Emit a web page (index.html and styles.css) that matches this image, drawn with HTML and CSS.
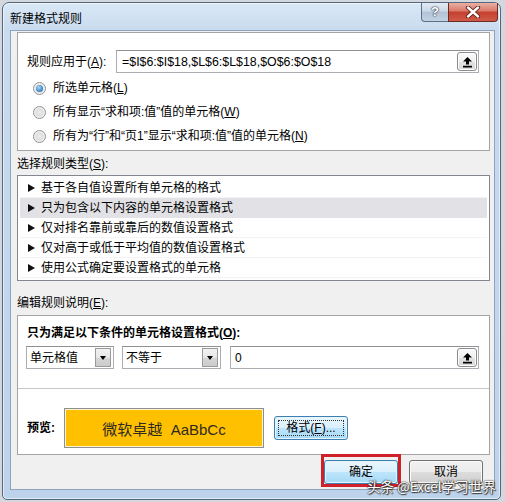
FILE: index.html
```html
<!DOCTYPE html>
<html lang="zh-CN">
<head>
<meta charset="utf-8">
<title>新建格式规则</title>
<link rel="stylesheet" href="styles.css">
</head>
<body>
<div class="window">
  <div class="titlebar">
    <span class="title">新建格式规则</span>
    <div class="caption-btns">
      <div class="cap help">?</div>
      <div class="cap close">
        <svg width="16" height="12" viewBox="0 0 16 12">
          <path d="M3 1.5 L13 10.5 M13 1.5 L3 10.5" stroke="#5a1a14" stroke-width="4.2" stroke-linecap="round"/>
          <path d="M3 1.5 L13 10.5 M13 1.5 L3 10.5" stroke="#ffffff" stroke-width="2.4" stroke-linecap="round"/>
        </svg>
      </div>
    </div>
  </div>
  <div class="client">
    <div class="panel top-panel">
      <div class="apply-row">
        <span class="apply-lbl">规则应用于(<u>A</u>):</span>
        <div class="textbox apply-box">
          <span class="tb-text">=$I$6:$I$18,$L$6:$L$18,$O$6:$O$18</span>
          <span class="ref-btn">
            <svg width="11" height="12" viewBox="0 0 11 12"><path d="M5.5 1 L10 5.5 L7 5.5 L7 8.5 L4 8.5 L4 5.5 L1 5.5 Z" fill="#000"/><rect x="1" y="9.8" width="9" height="1.7" fill="#000"/></svg>
          </span>
        </div>
      </div>
      <div class="radio-row"><span class="radio checked"></span><span>所选单元格(<u>L</u>)</span></div>
      <div class="radio-row"><span class="radio"></span><span>所有显示“求和项:值”值的单元格(<u>W</u>)</span></div>
      <div class="radio-row"><span class="radio"></span><span>所有为“行”和“页1”显示“求和项:值”值的单元格(<u>N</u>)</span></div>
    </div>

    <div class="section-label first">选择规则类型(<u>S</u>):</div>
    <ul class="rule-list">
      <li class="rule"><span class="tri"></span>基于各自值设置所有单元格的格式</li>
      <li class="rule selected"><span class="tri"></span>只为包含以下内容的单元格设置格式</li>
      <li class="rule"><span class="tri"></span>仅对排名靠前或靠后的数值设置格式</li>
      <li class="rule"><span class="tri"></span>仅对高于或低于平均值的数值设置格式</li>
      <li class="rule"><span class="tri"></span>使用公式确定要设置格式的单元格</li>
    </ul>

    <div class="section-label second">编辑规则说明(<u>E</u>):</div>
    <div class="panel edit-panel">
      <div class="bold-lbl">只为满足以下条件的单元格设置格式(<u>O</u>):</div>
      <div class="cond-row">
        <div class="combo combo-field"><span class="tb-text">单元格值</span><span class="dd"><span class="dd-arrow"></span></span></div>
        <div class="combo combo-op"><span class="tb-text">不等于</span><span class="dd"><span class="dd-arrow"></span></span></div>
        <div class="textbox value-box">
          <span class="tb-text">0</span>
          <span class="ref-btn">
            <svg width="11" height="12" viewBox="0 0 11 12"><path d="M5.5 1 L10 5.5 L7 5.5 L7 8.5 L4 8.5 L4 5.5 L1 5.5 Z" fill="#000"/><rect x="1" y="9.8" width="9" height="1.7" fill="#000"/></svg>
          </span>
        </div>
      </div>
      <div class="separator"></div>
      <div class="preview-row">
        <span class="bold-lbl preview-lbl">预览:</span>
        <div class="preview">微软卓越&nbsp;&nbsp;AaBbCc</div>
        <button class="btn btn-blue format-btn"><span class="focus-ring">格式(<u>F</u>)...</span></button>
      </div>
    </div>

    <div class="footer">
      <div class="ok-wrap"><button class="btn btn-blue">确定</button></div>
      <button class="btn cancel-btn">取消</button>
    </div>
  </div>
</div>
<div class="watermark">头条 @Excel学习世界</div>
</body>
</html>
```
FILE: styles.css
```css
* { box-sizing: border-box; }
html, body { margin: 0; padding: 0; }
body {
  width: 505px;
  height: 502px;
  overflow: hidden;
  position: relative;
  background: #d3d8de;
  font-family: "Liberation Sans", "Noto Sans CJK SC", sans-serif;
  font-size: 12px;
  color: #000;
}
u { text-decoration: underline; text-underline-offset: 1px; }

.window {
  margin: 2px 0 0 2px;
  width: 499px;
  height: 498px;
  border: 1px solid #55677d;
  border-radius: 7px 7px 5px 5px;
  background: linear-gradient(180deg, #dae8f6 0, #c8dbef 28px, #bdd3eb 100%);
  box-shadow: inset 0 0 0 1px rgba(255, 255, 255, 0.55);
  padding: 0 5px 9px 7px;
  display: flex;
  flex-direction: column;
}

.titlebar {
  height: 27px;
  display: flex;
  align-items: flex-start;
  flex: none;
}
.title {
  padding-top: 8px;
  line-height: 14px;
  font-size: 12px;
  font-family: "Noto Sans CJK SC", sans-serif;
  color: #000;
}
.caption-btns {
  margin-left: auto;
  margin-right: -3px;
  display: flex;
}
.cap {
  height: 19px;
  border: 1px solid #5f6f84;
  border-top: none;
  display: flex;
  align-items: center;
  justify-content: center;
}
.help {
  width: 27px;
  border-right: none;
  border-radius: 0 0 0 4px;
  background: linear-gradient(180deg, #e3ebf4 0, #cbd8e6 45%, #b3c3d6 50%, #c3d2e4 100%);
  color: #fff;
  font-family: "Liberation Sans", sans-serif;
  font-weight: bold;
  font-size: 13px;
  line-height: 16px;
  text-shadow: 0 0 1px #3b4a5c, 0 0 1px #3b4a5c, 0 0 2px #3b4a5c;
}
.close {
  width: 50px;
  border-radius: 0 0 4px 0;
  background: linear-gradient(180deg, #eab0a4 0, #d9786a 45%, #c4402f 50%, #d05a48 100%);
  border-color: #6b2a22;
}

.client {
  flex: 1;
  background: #f0f0f0;
  border: 1px solid #8ea3bd;
  padding: 1px 4px 0 6px;
  display: flex;
  flex-direction: column;
}

.panel {
  background: #fff;
  border: 1px solid #a4a4a4;
  flex: none;
}
.top-panel {
  height: 119px;
  padding: 17px 10px 0 9px;
}
.apply-row {
  display: flex;
  align-items: center;
  height: 23px;
}
.apply-lbl {
  width: 89px;
  flex: none;
  line-height: 16px;
}
.textbox {
  height: 23px;
  border: 1px solid #abadb3;
  border-top-color: #8e9196;
  background: #fff;
  display: flex;
  align-items: center;
}
.apply-box {
  flex: 1;
  padding-left: 5px;
}
.tb-text {
  flex: 1;
  line-height: 16px;
  white-space: nowrap;
}
.apply-box .tb-text { font-size: 12.4px; }
.ref-btn {
  width: 20px;
  height: 19px;
  margin-right: 1px;
  border: 1px solid #8c8c8c;
  border-radius: 3px;
  background: linear-gradient(180deg, #fbfbfb 0, #efefef 50%, #e2e2e2 51%, #d8d8d8 100%);
  box-shadow: inset 0 0 0 1px #fdfdfd;
  display: flex;
  align-items: center;
  justify-content: center;
}

.radio-row {
  height: 24px;
  display: flex;
  align-items: center;
  line-height: 16px;
}
.apply-row + .radio-row { margin-top: 3px; }
.radio {
  width: 13px;
  height: 13px;
  margin-left: 6px;
  margin-right: 7px;
  border-radius: 50%;
  border: 1px solid #8d9094;
  background: radial-gradient(circle at 50% 50%, #ececec 0, #dedede 45%, #f7f7f7 70%, #e4e4e4 100%);
  position: relative;
  flex: none;
}
.radio.checked::after {
  content: "";
  position: absolute;
  left: 2px;
  top: 2px;
  width: 7px;
  height: 7px;
  border-radius: 50%;
  background: radial-gradient(circle at 40% 35%, #a8d6f7 0, #4f93d2 55%, #1f5d9c 100%);
}

.section-label {
  height: 18px;
  line-height: 18px;
  flex: none;
}
.section-label.first { margin: 4px 0 2px; }
.section-label.second { margin: 13px 0 3px; }

.rule-list {
  list-style: none;
  margin: 0;
  padding: 2px;
  height: 106px;
  border: 1px solid #828790;
  background: #fff;
  flex: none;
}
.rule {
  height: 20px;
  display: flex;
  align-items: center;
  padding-left: 8px;
  line-height: 16px;
  border-bottom: 1px solid #f3f3f3;
}
.rule.selected { background: #e2e2e6; border-bottom-color: #e2e2e6; }
.tri {
  width: 0;
  height: 0;
  border-left: 7px solid #111;
  border-top: 4px solid transparent;
  border-bottom: 4px solid transparent;
  margin-right: 6px;
  margin-top: 1px;
}

.edit-panel {
  height: 140px;
  padding: 8px 10px 0 9px;
}
.bold-lbl {
  font-weight: bold;
  height: 18px;
  line-height: 18px;
}
.cond-row {
  margin-top: 4px;
  height: 23px;
  display: flex;
}
.combo {
  height: 23px;
  border: 1px solid #abadb3;
  border-top-color: #8e9196;
  background: #fff;
  display: flex;
  align-items: center;
  padding-left: 3px;
}
.combo-field { width: 88px; margin-left: -1px; }
.combo-op { width: 99px; margin-left: 8px; }
.dd {
  width: 16px;
  height: 19px;
  margin-right: 2px;
  border: 1px solid #9a9a9a;
  background: linear-gradient(180deg, #f2f2f2 0, #e6e6e6 50%, #d6d6d6 51%, #cbcbcb 100%);
  display: flex;
  align-items: center;
  justify-content: center;
}
.dd-arrow {
  width: 0;
  height: 0;
  border-top: 4px solid #000;
  border-left: 3.5px solid transparent;
  border-right: 3.5px solid transparent;
}
.value-box {
  width: 249px;
  margin-left: 9px;
  padding-left: 4px;
}

.separator {
  height: 1px;
  background: #c6c6c6;
  margin: 19px -10px 0 -9px;
}
.preview-row {
  margin-top: 19px;
  height: 40px;
  display: flex;
  align-items: center;
}
.preview-lbl { width: 37px; flex: none; }
.preview {
  width: 200px;
  height: 40px;
  border: 1px solid #8f8f8f;
  background: #ffc000;
  box-shadow: inset 0 0 0 1px #fff4cc;
  display: flex;
  align-items: center;
  justify-content: center;
  font-size: 15px;
  color: #2e2a22;
  white-space: nowrap;
}
.format-btn {
  margin-left: 10px;
  width: 74px;
  height: 22px;
}

.btn {
  font-family: "Liberation Sans", "Noto Sans CJK SC", sans-serif;
  font-size: 12px;
  color: #000;
  width: 74px;
  height: 24px;
  padding: 0;
  border: 1px solid #707070;
  border-radius: 3px;
  background: linear-gradient(180deg, #f2f2f2 0, #ebebeb 49%, #dddddd 50%, #cfcfcf 100%);
  box-shadow: inset 0 0 0 1px #fbfbfb;
  display: flex;
  align-items: center;
  justify-content: center;
  line-height: 14px;
}
.btn-blue {
  border-color: #3c7fb1;
  background: linear-gradient(180deg, #eaf6fd 0, #d9f0fc 49%, #bee6fd 50%, #a7d9f5 100%);
  box-shadow: inset 0 0 0 1px #e6f4fb;
}
.focus-ring {
  display: flex;
  align-items: center;
  justify-content: center;
  width: 66px;
  height: 16px;
  border: 1px dotted #333;
}

.footer {
  margin-top: 5px;
  padding-right: 7px;
  display: flex;
  justify-content: flex-end;
  flex: none;
}
.ok-wrap { position: relative; }
.ok-wrap::after {
  content: "";
  position: absolute;
  left: -3px;
  right: -3px;
  top: -6px;
  bottom: -3px;
  border: 3px solid #d0202a;
}
.cancel-btn { margin-left: 11px; }

.watermark {
  position: absolute;
  left: 367px;
  top: 480px;
  font-family: "Noto Sans CJK SC", sans-serif;
  font-size: 13.5px;
  line-height: 13px;
  color: #fff;
  white-space: nowrap;
  text-shadow: 0 0 1px #222, 0 0 2px #222, 1px 1px 1px #444;
}
```
